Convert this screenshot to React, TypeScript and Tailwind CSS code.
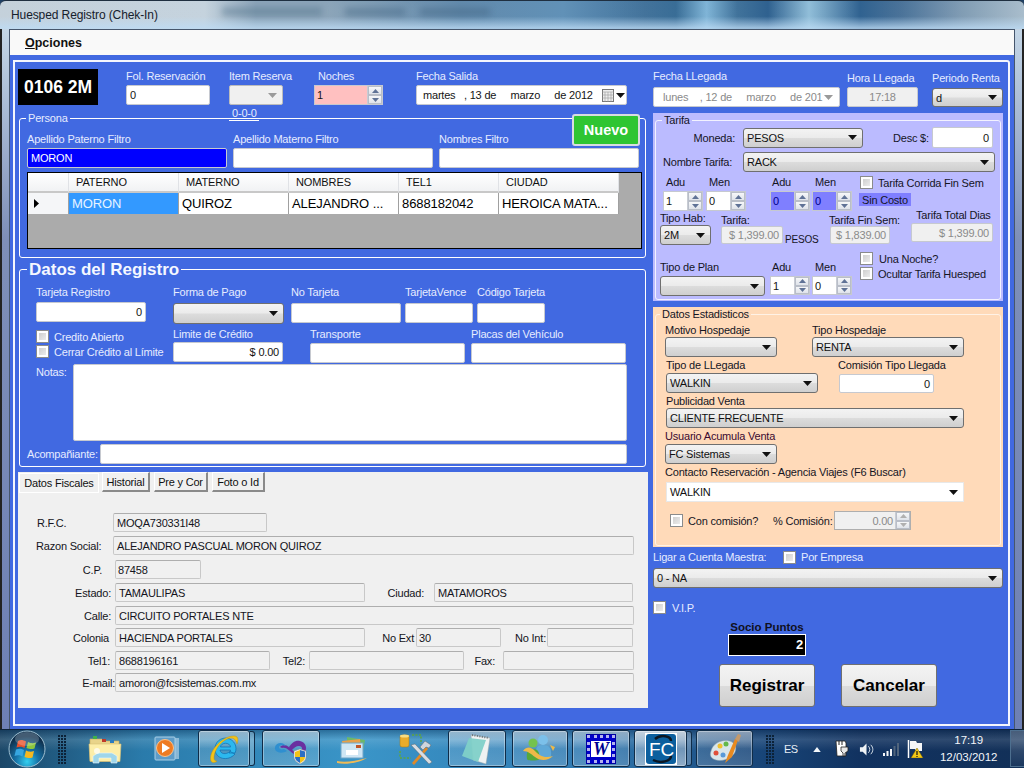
import React from 'react';

const cx = (...c: (string | undefined | false)[]) => c.filter(Boolean).join(' ');

const Lb: React.FC<{ className?: string; children: React.ReactNode }> = ({ className, children }) => (
  <span className={cx('block whitespace-nowrap', className)}>{children}</span>
);

const Arrow: React.FC<{ gray?: boolean }> = ({ gray }) => (
  <svg width="9" height="5" viewBox="0 0 9 5" className="shrink-0">
    <path d="M0 0h9L4.5 5z" fill={gray ? '#9a9a9a' : '#111'} />
  </svg>
);

const Box: React.FC<{ className?: string; right?: boolean; children?: React.ReactNode }> = ({ className, right, children }) => (
  <div className={cx('flex items-center shrink-0 whitespace-nowrap overflow-hidden px-[3px] rounded-[2px] border border-[#c6c9d0] text-[#141414]', right && 'justify-end', className ?? 'bg-white')}>
    {children}
  </div>
);

const Combo: React.FC<{ className?: string; children?: React.ReactNode }> = ({ className, children }) => (
  <div className={cx('flex items-center justify-between shrink-0 px-[3px] pr-[5px] rounded-[3px] border border-[#6f6f6f] bg-[linear-gradient(180deg,#f3f3f3_0%,#ebebeb_48%,#dcdcdc_52%,#cfcfcf_100%)] text-[#111]', className)}>
    <span className="whitespace-nowrap">{children}</span>
    <Arrow />
  </div>
);

const SpinBtns: React.FC<{ dim?: boolean }> = ({ dim }) => (
  <div className="flex flex-col w-[15px] h-full shrink-0 border-l border-[#c8ccd4] bg-[#eef0f4]">
    {[0, 1].map((i) => (
      <div key={i} className="flex-1 flex items-center justify-center border border-[#b9bec8] bg-[linear-gradient(180deg,#f6f7f9,#dfe3ea)]">
        <svg width="7" height="4" viewBox="0 0 7 4">
          <path d={i === 0 ? 'M0 4L3.5 0 7 4z' : 'M0 0h7L3.5 4z'} fill={dim ? '#b0b0b0' : '#5f7296'} />
        </svg>
      </div>
    ))}
  </div>
);

const Spin: React.FC<{ v: string; className: string; field?: string; text?: string }> = ({ v, className, field = 'bg-white', text = 'text-[#141414]' }) => (
  <div className={cx('flex shrink-0 border border-[#c6c9d0] bg-white', text, className)}>
    <div className={cx('flex-1 flex items-center pl-[2px]', field)}>{v}</div>
    <SpinBtns />
  </div>
);

const Check: React.FC<{ className?: string }> = ({ className }) => (
  <div className={cx('w-[13px] h-[13px] shrink-0 border border-[#8a8b8c] bg-white p-[2px]', className)}>
    <div className="w-full h-full bg-[linear-gradient(135deg,#cfcfcf,#ececec)]" />
  </div>
);

const Legend: React.FC<{ className: string; children: React.ReactNode }> = ({ className, children }) => (
  <span className={cx('absolute whitespace-nowrap px-[2px]', className)}>{children}</span>
);

const RO: React.FC<{ className: string; children?: React.ReactNode }> = ({ className, children }) => (
  <div className={cx('flex items-center shrink-0 h-[19px] px-[3px] border border-[#c8c8c8] border-t-[#aeaeae] rounded-[2px] bg-[#f0f0f0] whitespace-nowrap text-[#141420]', className)}>
    {children}
  </div>
);

const Tab: React.FC<{ className: string; children: React.ReactNode }> = ({ className, children }) => (
  <div className={cx('flex items-center justify-center whitespace-nowrap h-[20px] bg-[#f0f0f0] border-t border-l border-t-white border-l-white border-r-2 border-b-2 border-r-[#8a8a8a] border-b-[#8a8a8a] text-[#111]', className)}>
    {children}
  </div>
);

const Gripper: React.FC<{ className?: string }> = ({ className }) => (
  <div className={cx('grid grid-cols-3 gap-x-[1px] gap-y-[1px] w-[8px] content-center', className)}>
    {Array.from({ length: 30 }).map((_, i) => (
      <span key={i} className="w-[2px] h-[2px] bg-[#0c2238]" />
    ))}
  </div>
);

const TaskBtn: React.FC<{ className: string; active?: boolean; stack?: boolean; children: React.ReactNode }> = ({ className, active, stack, children }) => (
  <div className={cx('relative shrink-0 mb-[1px] flex items-center justify-center rounded-[3px] border border-[#0f2c48]', active ? 'bg-[linear-gradient(180deg,rgba(255,255,255,.75),rgba(255,255,255,.35)_50%,rgba(255,255,255,.5))]' : 'bg-[linear-gradient(180deg,rgba(255,255,255,.5),rgba(255,255,255,.12)_50%,rgba(255,255,255,.18))]', 'shadow-[inset_0_0_0_1px_rgba(255,255,255,.35)]', className)}>
    {children}
    {stack && <span className="absolute top-0 bottom-0 -right-[6px] w-[5px] rounded-r-[3px] border border-l-0 border-[#0f2c48] bg-white/25" />}
  </div>
);

const Orb = () => (
  <svg width="38" height="38" viewBox="0 0 38 38">
    <defs>
      <radialGradient id="orbg" cx="50%" cy="85%" r="70%">
        <stop offset="0" stopColor="#33d0f0" />
        <stop offset=".45" stopColor="#1673a8" />
        <stop offset="1" stopColor="#0f2f4c" />
      </radialGradient>
    </defs>
    <circle cx="19" cy="19" r="18" fill="url(#orbg)" stroke="#9fc0d2" strokeWidth="1" />
    <path d="M10 11c3-1.5 5-1 8 .5l-1.500 6.500c-3-1.500-5-1.500-8-.5z" fill="#e8502a" />
    <path d="M20 12c3 1.500 5 1.500 8 .5l-1.500 6c-3 1-5 .5-8-.5z" fill="#8cc63f" />
    <path d="M8 19.500c3-1 5-1 8 .5l-1.500 6.500c-3-1.500-5-1.500-8-.5z" fill="#36a6e0" />
    <path d="M18 20.500c3 1.500 5 1.500 8 .5l-1.500 6.500c-3 1-5 .5-8-.5z" fill="#f5b81f" />
    <ellipse cx="19" cy="9" rx="12" ry="7" fill="#fff" opacity=".22" />
  </svg>
);

const Folder = () => (
  <svg width="34" height="30" viewBox="0 0 34 30">
    <path d="M2 5h12l2 2h15v20H2z" fill="#e9d48a" stroke="#c7a95c" strokeWidth=".6" />
    <rect x="5" y="2" width="4" height="3" fill="#3fb04a" />
    <rect x="14" y="5" width="4" height="3" fill="#c0392b" />
    <rect x="22" y="6" width="4" height="3" fill="#2b7cc0" />
    <path d="M1 10h32l-1 17.500H2z" fill="#fdeea8" stroke="#d8bf73" strokeWidth=".6" />
    <path d="M5 29v-7l5-3h14l5 3v7h-6v-5H11v5z" fill="#9fd6ea" stroke="#e9f6fb" strokeWidth=".6" />
    <circle cx="9" cy="17" r="3" fill="#fff" opacity=".7" />
  </svg>
);

const Wmp = () => (
  <svg width="30" height="28" viewBox="0 0 30 28">
    <rect x="8" y="3" width="20" height="21" fill="#9fc6e0" opacity=".8" />
    <rect x="4" y="2" width="20" height="23" rx="1" fill="#5e9cc8" stroke="#a9cfe6" />
    <circle cx="14" cy="13" r="8.500" fill="#ee7b22" stroke="#f9c48e" />
    <path d="M11 8l8 5-8 5z" fill="#fff" />
  </svg>
);

const Ie = () => (
  <svg width="32" height="34" viewBox="0 0 32 34">
    <path d="M7 17a10.500 10.500 0 1 1 20 4h-6c1-1 1.500-2 1.500-3H12c.5 4 6 5 10 1.500l5 2.500C20 30 7 27 7 17zm5.500-2h10c-.5-5-9.500-5-10 0z" fill="#2cb8ee" stroke="#0f6fb0" strokeWidth=".7" />
    <path d="M3 29C0 21 12 5 25 4c5-.5 6 3 4 8-1-4-3-6-6-6C14 7 6 18 6 26c0 2 1 3 3 3-2 2-5 2-6 0z" fill="#f2c318" stroke="#b88a10" strokeWidth=".4" />
  </svg>
);

const Vs = () => (
  <svg width="34" height="30" viewBox="0 0 34 30">
    <path d="M6 13c4-4 8-1 11 2s7 5 10 2c2-2 1-5-2-5-3 0-5 2-7 4l-3-3c3-4 6-7 11-6 6 1 8 8 4 12-5 4-10 2-14-2-3-3-6-4-8-3z" fill="#6a2fa0" />
    <path d="M1 13c1-4 6-5 9-3l2 2c-3-1-6-1-7 1 0 2 2 3 5 2l3 2c-5 3-13 2-12-4z" fill="#2e8fd0" />
    <path d="M20 17l6-2 6 2v6c0 3-2 5-6 7-4-2-6-4-6-7z" fill="#f5f5f5" stroke="#888" strokeWidth=".5" />
    <path d="M26 16l5 1.500V23h-5zM26 23v6c-3-1.500-5-3-5-6z" fill="#2a6fc4" />
    <path d="M21 18l5-2v7h-5zM26 23h5c0 3-2 4.500-5 6z" fill="#f2c318" />
  </svg>
);

const Mail = () => (
  <svg width="32" height="30" viewBox="0 0 32 30">
    <path d="M10 3l18 3-3 16-15-3z" fill="#6bb86a" />
    <path d="M5 7l18-2 2 16-18 2z" fill="#e8a04a" />
    <rect x="4" y="9" width="22" height="15" fill="#cfe6f4" stroke="#6fa5c8" />
    <rect x="9" y="16" width="12" height="5" fill="#fff" />
    <rect x="19" y="11" width="5" height="3" fill="#c0562a" />
    <path d="M0 27c8 2 18 0 30-3-8 5-22 7-30 5z" fill="#f0bb55" />
  </svg>
);

const Tools = () => (
  <svg width="34" height="32" viewBox="0 0 34 32">
    <rect x="1" y="2" width="9" height="12" rx="2" fill="#e8ac2c" stroke="#a87a10" strokeWidth=".5" />
    <ellipse cx="5.500" cy="3" rx="4.500" ry="1.500" fill="#f7dc82" />
    <path d="M13 2h9v9M1 18v7h11" fill="none" stroke="#5fa53c" strokeWidth="1.500" strokeDasharray="2 1.500" />
    <path d="M13 30l14-16 2 2-14 16z" fill="#e08a28" />
    <path d="M12 12l4-1 17 18-3 2z" fill="#d8dde2" stroke="#555" strokeWidth=".4" />
    <path d="M21 14l5-6 6 4-2 3-3-1-3 3z" fill="#cfd6dc" stroke="#555" strokeWidth=".4" />
  </svg>
);

const Notepad = () => (
  <svg width="32" height="34" viewBox="0 0 32 34">
    <path d="M10 3l19 3-4 26-13-4z" fill="#eef2f2" stroke="#9aa7ab" strokeWidth=".5" />
    <path d="M8 6l17 2-8 22L1 24z" fill="#7fd0c8" opacity=".95" />
    <path d="M11 3l17 3" stroke="#6b7478" strokeWidth="2" strokeDasharray="1 1.500" />
  </svg>
);

const Messenger = () => (
  <svg width="34" height="30" viewBox="0 0 34 30">
    <circle cx="20" cy="6" r="5" fill="#7cc0ea" />
    <path d="M13 22c-1-8 1-11 7-11s9 3 8 11c0 3-15 3-15 0z" fill="#5fa8d8" />
    <circle cx="10" cy="9" r="4.500" fill="#74c24e" />
    <path d="M4 25c-1-7 1-10 6-10s7 3 6 10c0 2-12 2-12 0z" fill="#55a83a" />
    <path d="M0 17c4-5 8-4 12 0s9 8 18 5c-5 5-13 5-18 1-4-3-7-6-12-6z" fill="#eeb948" />
    <path d="M27 11l5 2-2 4z" fill="#eeb948" />
  </svg>
);

const WordIcon = () => (
  <div className="flex items-center justify-center w-[28px] h-[28px] bg-[#0000c8] border-[3px] border-dotted border-[#fff]/70 outline outline-1 outline-[#0000a0]">
    <span className="flex items-center justify-center w-[20px] h-[16px] bg-white font-['Liberation_Serif'] font-bold italic text-[18px] leading-none text-[#000090]">W</span>
  </div>
);

const FcIcon = () => (
  <svg width="32" height="32" viewBox="0 0 32 32">
    <rect width="32" height="32" fill="#fff" />
    <rect x="1" y="1" width="30" height="30" rx="3" fill="#0b5f9e" />
    <path d="M10 6c6-5 16-3 16 2M8 27c8 4 18 1 18-4" stroke="#0b1622" strokeWidth="2.500" fill="none" />
    <text x="4" y="23" fontFamily="Liberation Sans, sans-serif" fontSize="19" fill="#fff">FC</text>
  </svg>
);

const Paint = () => (
  <svg width="34" height="32" viewBox="0 0 34 32">
    <path d="M3 18C5 9 17 5 24 9c5 3 5 10 0 14-5 5-16 6-20 2-2-2-2-4-1-7z" fill="#d9e6ea" stroke="#8ba1ad" strokeWidth=".5" />
    <circle cx="8" cy="20" r="2.500" fill="#e0503a" />
    <circle cx="12" cy="13" r="2.500" fill="#f0c030" />
    <circle cx="18" cy="11" r="2.500" fill="#63b84a" />
    <circle cx="15" cy="22" r="2.500" fill="#5a9ad8" />
    <path d="M17 30l3-8 7-16 3 1-6 17z" fill="#e88a20" />
    <path d="M27 6l3-5 3 1-2 7z" fill="#c49a6c" />
  </svg>
);

const Tray = () => (
  <>
    <svg width="8" height="5" viewBox="0 0 9 6" className="ml-[15px]"><path d="M0 6L4.500 0 9 6z" fill="#f2f6fa" /></svg>
    <svg width="15" height="18" viewBox="0 0 15 18" className="ml-[14px]">
      <path d="M1 1h9l1 2v13H2z" fill="#fff" stroke="#222" strokeWidth=".8" />
      <path d="M4 1v4M7 1v4" stroke="#222" />
      <path d="M6 7h7v4l-3 2v3H8v-3L6 11z" fill="#e8e8e8" stroke="#222" strokeWidth=".8" />
    </svg>
    <svg width="15" height="15" viewBox="0 0 16 15" className="ml-[9px]">
      <path d="M1 5h3l4-4v13L4 10H1z" fill="#eef2f5" />
      <path d="M10 4c2 2 2 5 0 7M12.500 2.500c3 3 3 7 0 10" stroke="#dfe8ef" fill="none" />
    </svg>
    <svg width="16" height="13" viewBox="0 0 16 13" className="ml-[9px]">
      <path d="M0 10h2v3H0zM3.500 8h2v5h-2zM7 6h2v7H7z" fill="#f4f6f8" />
      <path d="M10.500 3h2v10h-2zM14 0h2v13h-2z" fill="#50647c" />
    </svg>
    <svg width="17" height="18" viewBox="0 0 17 18" className="ml-[8px]">
      <path d="M1.500 0v18" stroke="#fff" strokeWidth="1.500" />
      <path d="M3 1h6l1 2h5v8H9l-1-2H3z" fill="#f4f6f8" />
      <path d="M10 8l6 10H4z" fill="#f2c818" stroke="#7a6000" strokeWidth=".5" />
      <path d="M10 11v4M10 16v1" stroke="#111" strokeWidth="1.200" />
    </svg>
  </>
);

export default function App() {
  return (
    <div className="relative flex flex-col w-[1024px] h-[768px] overflow-hidden bg-[#1d3e62] font-['Liberation_Sans',Arial,sans-serif] text-[11px] tracking-[-0.2px] leading-[14px]">
      {/* window glass */}
      <div className="flex flex-col h-[729px] shrink-0 rounded-t-[6px] border-t border-[#1f2f40] bg-[linear-gradient(90deg,#c3d0da_0%,#c4d2dd_20%,#8aa3b8_25%,#8aa3b8_32%,#5f88aa_45%,#5e8fb6_55%,#3f7099_63%,#356a94_66%,#7db3d6_69%,#3d7099_72%,#2b5e8d_75%,#8fbdd8_79%,#2c5f8e_84%,#477097_88%,#7f9bb3_94%,#a7bccb_100%)]">
        <div className="relative h-[28px] shrink-0 pl-[11px] pt-[7px] text-[12px] tracking-[-0.1px] text-[#15202c] bg-[linear-gradient(180deg,rgba(255,255,255,.02)_55%,rgba(190,220,245,.75)_95%)]">
          Huesped Registro (Chek-In)
          <span aria-hidden className="absolute left-[222px] top-[6px] w-[100px] h-[9px] bg-[#4b6d88]/40 blur-[3px]" />
          <span aria-hidden className="absolute left-[345px] top-[7px] w-[60px] h-[8px] bg-[#3d5f7c]/40 blur-[3px]" />
          <span aria-hidden className="absolute left-[420px] top-[7px] w-[70px] h-[8px] bg-[#3d5f7c]/40 blur-[3px]" />
        </div>

        <div className="flex flex-1 min-h-0 bg-[linear-gradient(180deg,#c4d6e6,#7e8fb8_30%,#6e80b4)]">
          <div className="w-[9px] shrink-0 border-l-2 border-[#232323]" />
          <div className="flex flex-col w-[1006px] shrink-0 border-x border-t border-[#46566c]">
            <div className="flex items-center h-[25px] shrink-0 pl-[15px] bg-[#f9f9f9] text-[12.5px] tracking-normal font-bold text-[#111]">
              <span><span className="underline">O</span>pciones</span>
            </div>

            <div className="flex-1 min-h-0 bg-[#4169e1] pl-[3px] pt-[5px] pb-[3px] pr-[4px]">
              <div className="flex w-[997px] h-full border-2 border-[#f4f6fd] rounded-tr-[3px] text-[#e6ecff]">
                {/* left column */}
                <div className="flex flex-col w-[632px] ml-[3px] shrink-0 pt-[7px]">
                  <div className="flex h-[36px] shrink-0">
                    <div className="flex items-center justify-center w-[80px] h-[36px] bg-black text-white font-bold text-[17.5px] tracking-normal">0106 2M</div>
                    <div className="ml-[28px] w-[84px]">
                      <Lb className="h-[16px]">Fol. Reservación</Lb>
                      <Box className="h-[20px] bg-white">0</Box>
                    </div>
                    <div className="ml-[19px] w-[54px]">
                      <Lb className="h-[16px]">Item Reserva</Lb>
                      <div className="flex items-center justify-end h-[20px] pr-[5px] rounded-[2px] border border-[#bcbcbc] bg-[#f0f0f0]"><Arrow gray /></div>
                      <Lb className="mt-[1px] pl-[3px] border-b border-white w-[30px]">0-0-0</Lb>
                    </div>
                    <div className="ml-[31px] w-[69px]">
                      <Lb className="h-[16px] pl-[4px]">Noches</Lb>
                      <Spin v="1" className="h-[20px] w-[69px]" field="bg-[#ffc0c0]" />
                    </div>
                    <div className="ml-[33px] w-[211px]">
                      <Lb className="h-[16px]">Fecha Salida</Lb>
                      <Box className="h-[20px] bg-white justify-between pl-[6px] pr-[1px]">
                        <span className="whitespace-pre">martes   , 13 de     marzo     de 2012</span>
                        <span className="flex items-center gap-[2px]">
                          <svg width="12" height="13" viewBox="0 0 12 13"><rect x=".5" y=".5" width="11" height="12" fill="#eee" stroke="#777" /><path d="M0 3h12M3 3v10M6 3v10M9 3v10M0 6h12M0 9h12" stroke="#999" strokeWidth=".6" /></svg>
                          <Arrow />
                        </span>
                      </Box>
                    </div>
                  </div>

                  {/* Persona */}
                  <div className="relative ml-[1px] mt-[13px] w-[627px] h-[140px] shrink-0 border border-white rounded-[3px] pl-[7px] pt-[13px]">
                    <Legend className="left-[6px] -top-[8px] bg-[#4169e1]">Persona</Legend>
                    <div className="absolute left-[552px] -top-[5px] flex items-center justify-center w-[68px] h-[32px] rounded-[3px] border-2 border-[#d8dce0] bg-[#2ec532] text-white font-bold text-[14.5px] tracking-normal">Nuevo</div>
                    <div className="flex gap-[6px]">
                      {['Apellido Paterno Filtro', 'Apellido Materno Filtro', 'Nombres Filtro'].map((t, i) => (
                        <div key={t} className="w-[200px]">
                          <Lb className="h-[16px]">{t}</Lb>
                          <Box className={i === 0 ? 'h-[20px] bg-[#0000ff] !text-white' : 'h-[20px] bg-white'}>{i === 0 ? 'MORON' : ''}</Box>
                        </div>
                      ))}
                    </div>
                    <div className="mt-[4px] w-[615px] h-[77px] border border-black bg-[#ababab] text-[13px] tracking-[-0.1px] text-black">
                      <div className="flex h-[20px] text-[11px] tracking-[-0.1px] text-[#111]">
                        {[['', 'w-[41px]'], ['PATERNO', 'w-[110px]'], ['MATERNO', 'w-[110px]'], ['NOMBRES', 'w-[110px]'], ['TEL1', 'w-[100px]'], ['CIUDAD', 'w-[120px]']].map(([t, w]) => (
                          <div key={t} className={cx('flex items-center pl-[7px] border-r border-b-2 border-r-[#e0e2e6] border-b-[#c8c8c8] bg-[linear-gradient(180deg,#fff,#f1f2f4)]', w)}>{t}</div>
                        ))}
                      </div>
                      <div className="flex h-[21px]">
                        <div className="flex items-center pl-[6px] w-[41px] border-r border-[#a0a0a0] bg-[#f5f6f8]">
                          <svg width="5" height="9" viewBox="0 0 5 9"><path d="M0 0l5 4.500L0 9z" fill="#000" /></svg>
                        </div>
                        <div className="flex items-center pl-[3px] w-[110px] bg-[#3399ff] text-[#e8f4ff] border-r border-[#a0a0a0]">MORON</div>
                        {[['QUIROZ', 'w-[110px]'], ['ALEJANDRO ...', 'w-[110px]'], ['8688182042', 'w-[100px]'], ['HEROICA MATA...', 'w-[120px]']].map(([t, w]) => (
                          <div key={t} className={cx('flex items-center pl-[3px] bg-white border-r border-[#a0a0a0] whitespace-nowrap overflow-hidden', w)}>{t}</div>
                        ))}
                      </div>
                    </div>
                  </div>

                  {/* Datos del Registro */}
                  <div className="relative ml-[1px] mt-[11px] w-[627px] h-[198px] shrink-0 border border-white rounded-[3px] pt-[15px]">
                    <Legend className="left-[7px] -top-[11px] bg-[#4169e1] text-[17px] tracking-normal leading-[22px] font-bold text-[#f4f7ff]">Datos del Registro</Legend>
                    <div className="flex h-[39px] pl-[16px]">
                      <div className="w-[110px]">
                        <Lb className="h-[17px]">Tarjeta Registro</Lb>
                        <Box right className="h-[20px] bg-white">0</Box>
                      </div>
                      <div className="ml-[27px] w-[111px]">
                        <Lb className="h-[18px]">Forma de Pago</Lb>
                        <Combo className="h-[21px]" />
                      </div>
                      <div className="ml-[7px] w-[110px]">
                        <Lb className="h-[18px]">No Tarjeta</Lb>
                        <Box className="h-[20px] bg-white" />
                      </div>
                      <div className="ml-[4px] w-[68px]">
                        <Lb className="h-[18px]">TarjetaVence</Lb>
                        <Box className="h-[20px] bg-white" />
                      </div>
                      <div className="ml-[4px] w-[68px]">
                        <Lb className="h-[18px]">Código Tarjeta</Lb>
                        <Box className="h-[20px] bg-white" />
                      </div>
                    </div>
                    <div className="flex h-[36px] mt-[3px] pl-[16px]">
                      <div className="w-[137px] pt-[3px]">
                        <div className="flex items-center gap-[5px] h-[13px]"><Check /><Lb>Credito Abierto</Lb></div>
                        <div className="flex items-center gap-[5px] h-[13px] mt-[2px]"><Check /><Lb>Cerrar Crédito al Límite</Lb></div>
                      </div>
                      <div className="w-[110px]">
                        <Lb className="h-[15px]">Limite de Crédito</Lb>
                        <Box right className="h-[20px] bg-white">$ 0.00</Box>
                      </div>
                      <div className="ml-[27px] w-[155px]">
                        <Lb className="h-[16px]">Transporte</Lb>
                        <Box className="h-[20px] bg-white" />
                      </div>
                      <div className="ml-[6px] w-[155px]">
                        <Lb className="h-[16px]">Placas del Vehículo</Lb>
                        <Box className="h-[20px] bg-white" />
                      </div>
                    </div>
                    <div className="flex h-[77px] mt-[1px] pl-[16px]">
                      <Lb className="w-[37px] pt-[1px]">Notas:</Lb>
                      <Box className="w-[554px] h-[77px] bg-white" />
                    </div>
                    <div className="flex items-center h-[20px] mt-[3px] pl-[7px]">
                      <Lb className="w-[73px]">Acompañiante:</Lb>
                      <Box className="w-[527px] h-[20px] bg-white" />
                    </div>
                  </div>

                  {/* tabs */}
                  <div className="mt-[5px] w-[630px] h-[236px] shrink-0 bg-[#f0f0f0] text-[#141420]">
                    <div className="flex items-start h-[41px] pl-[1px]">
                      <Tab className="w-[80px] mt-[1px] !border-r !border-b !border-r-white !border-b-white">Datos Fiscales</Tab>
                      <Tab className="w-[48px] ml-[3px]">Historial</Tab>
                      <Tab className="w-[54px] ml-[4px]">Pre y Cor</Tab>
                      <Tab className="w-[53px] ml-[4px]">Foto o Id</Tab>
                    </div>
                    <div className="flex items-center">
                      <Lb className="w-[95px] pl-[19px]">R.F.C.</Lb>
                      <RO className="w-[154px]">MOQA730331I48</RO>
                    </div>
                    <div className="flex items-center mt-[4px]">
                      <Lb className="w-[95px] pl-[18px]">Razon Social:</Lb>
                      <RO className="w-[521px]">ALEJANDRO PASCUAL MORON QUIROZ</RO>
                    </div>
                    <div className="flex items-center mt-[5px]">
                      <Lb className="w-[97px] pr-[13px] text-right">C.P.</Lb>
                      <RO className="w-[86px] pl-[2px]">87458</RO>
                    </div>
                    <div className="flex items-center mt-[4px]">
                      <Lb className="w-[97px] pr-[4px] text-right">Estado:</Lb>
                      <RO className="w-[250px]">TAMAULIPAS</RO>
                      <Lb className="w-[69px] pr-[10px] text-right">Ciudad:</Lb>
                      <RO className="w-[199px]">MATAMOROS</RO>
                    </div>
                    <div className="flex items-center mt-[4px]">
                      <Lb className="w-[97px] pr-[4px] text-right">Calle:</Lb>
                      <RO className="w-[519px]">CIRCUITO PORTALES NTE</RO>
                    </div>
                    <div className="flex items-center mt-[3px]">
                      <Lb className="w-[97px] pr-[6px] text-right">Colonia</Lb>
                      <RO className="w-[250px]">HACIENDA PORTALES</RO>
                      <Lb className="w-[51px] pr-[2px] text-right">No Ext</Lb>
                      <RO className="w-[85px] pl-[2px]">30</RO>
                      <Lb className="w-[46px] pr-[1px] text-right">No Int:</Lb>
                      <RO className="w-[86px]" />
                    </div>
                    <div className="flex items-center mt-[4px]">
                      <Lb className="w-[97px] pr-[5px] text-right">Tel1:</Lb>
                      <RO className="w-[155px]">8688196161</RO>
                      <Lb className="w-[39px] pr-[4px] text-right">Tel2:</Lb>
                      <RO className="w-[155px]" />
                      <Lb className="w-[39px] pr-[8px] text-right">Fax:</Lb>
                      <RO className="w-[131px]" />
                    </div>
                    <div className="flex items-center mt-[3px]">
                      <Lb className="w-[97px] text-right">E-mail:</Lb>
                      <RO className="w-[519px]">amoron@fcsistemas.com.mx</RO>
                    </div>
                  </div>
                </div>

                {/* right column */}
                <div className="flex flex-col w-[350px] ml-[3px] shrink-0 pt-[7px]">
                  <div className="flex h-[38px] shrink-0">
                    <div className="w-[187px]">
                      <Lb className="h-[18px]">Fecha LLegada</Lb>
                      <Box className="h-[20px] bg-white justify-between !text-[#8a8a8a] pl-[9px] pr-[6px]">
                        <span className="whitespace-pre">lunes    , 12 de     marzo     de 201</span>
                        <Arrow gray />
                      </Box>
                    </div>
                    <div className="ml-[7px] w-[71px]">
                      <Lb className="h-[18px] pt-[2px]">Hora LLegada</Lb>
                      <Box className="h-[20px] bg-[#f0f0f0] justify-center !text-[#8a8a8a]">17:18</Box>
                    </div>
                    <div className="ml-[14px] w-[71px]">
                      <Lb className="h-[19px] pt-[2px]">Periodo Renta</Lb>
                      <Combo className="h-[19px]">d</Combo>
                    </div>
                  </div>

                  {/* Tarifa */}
                  <div className="mt-[6px] w-[350px] h-[188px] shrink-0 bg-[#bbbbff] pl-[2px] pt-[7px] text-[#15151f]">
                    <div className="relative w-[346px] h-[180px] border border-[#f2f2ff] rounded-[3px]">
                      <Legend className="left-[6px] -top-[8px] bg-[#bbbbff]">Tarifa</Legend>
                      <div className="flex items-center h-[21px] mt-[6px]">
                        <Lb className="w-[79px] text-right">Moneda:</Lb>
                        <Combo className="ml-[8px] w-[120px] h-[20px]">PESOS</Combo>
                        <Lb className="ml-[30px] w-[36px]">Desc $:</Lb>
                        <Box right className="ml-[3px] w-[61px] h-[21px] bg-white">0</Box>
                      </div>
                      <div className="flex items-center h-[20px] mt-[4px]">
                        <Lb className="ml-[7px] w-[70px]">Nombre Tarifa:</Lb>
                        <Combo className="ml-[10px] w-[252px] h-[20px]">RACK</Combo>
                      </div>
                      <div className="flex items-start h-[36px] mt-[3px]">
                        <div className="ml-[7px] w-[40px]"><Lb className="h-[16px] pl-[3px]">Adu</Lb><Spin v="1" className="h-[20px] w-[40px]" /></div>
                        <div className="ml-[3px] w-[40px]"><Lb className="h-[16px] pl-[3px]">Men</Lb><Spin v="0" className="h-[20px] w-[40px]" /></div>
                        <div className="ml-[24px] w-[40px]"><Lb className="h-[16px] pl-[2px]">Adu</Lb><Spin v="0" className="h-[20px] w-[40px]" field="bg-[#7f7fff]" text="text-[#00008a]" /></div>
                        <div className="ml-[2px] w-[40px]"><Lb className="h-[16px] pl-[3px]">Men</Lb><Spin v="0" className="h-[20px] w-[40px]" field="bg-[#7f7fff]" text="text-[#00008a]" /></div>
                        <div className="ml-[7px]">
                          <div className="flex items-center gap-[5px] ml-[1px] mt-[1px] h-[13px]"><Check /><Lb>Tarifa Corrida Fin Sem</Lb></div>
                          <div className="flex items-center w-[52px] h-[13px] mt-[4px] pl-[3px] bg-[#7f7fff]"><Lb>Sin Costo</Lb></div>
                        </div>
                      </div>
                      <div className="flex items-start h-[33px] mt-[1px]">
                        <div className="ml-[4px] w-[51px]"><Lb className="h-[13px] leading-[13px]">Tipo Hab:</Lb><Combo className="h-[20px]">2M</Combo></div>
                        <div className="ml-[10px] w-[62px] mt-[2px]"><Lb className="h-[12px] leading-[12px]">Tarifa:</Lb><Box right className="h-[18px] bg-[#f0f0f0] !text-[#8a8a8a] w-[62px]">$ 1,399.00</Box></div>
                        <Lb className="ml-[2px] w-[44px] mt-[21px] text-[10px]">PESOS</Lb>
                        <div className="w-[61px] mt-[2px]"><Lb className="h-[12px] leading-[12px]">Tarifa Fin Sem:</Lb><Box right className="ml-[1px] h-[18px] bg-[#f0f0f0] !text-[#8a8a8a] w-[60px]">$ 1,839.00</Box></div>
                        <div className="ml-[21px] w-[82px] -mt-[4px]"><Lb className="h-[15px] pl-[5px]">Tarifa Total Dias</Lb><Box right className="h-[19px] bg-[#f0f0f0] !text-[#8a8a8a]">$ 1,399.00</Box></div>
                      </div>
                      <div className="flex items-start mt-[5px]">
                        <div className="ml-[4px] w-[105px] mt-[10px]"><Lb className="h-[16px]">Tipo de Plan</Lb><Combo className="h-[20px]" /></div>
                        <div className="ml-[5px] w-[40px] mt-[10px]"><Lb className="h-[16px] pl-[2px]">Adu</Lb><Spin v="1" className="h-[19px] w-[40px]" /></div>
                        <div className="ml-[2px] w-[40px] mt-[10px]"><Lb className="h-[16px] pl-[3px]">Men</Lb><Spin v="0" className="h-[19px] w-[40px]" /></div>
                        <div className="ml-[8px] mt-[2px]">
                          <div className="flex items-center gap-[6px] h-[13px]"><Check /><Lb>Una Noche?</Lb></div>
                          <div className="flex items-center gap-[5px] h-[13px] mt-[2px]"><Check /><Lb>Ocultar Tarifa Huesped</Lb></div>
                        </div>
                      </div>
                    </div>
                  </div>

                  {/* Datos Estadisticos */}
                  <div className="mt-[6px] w-[350px] h-[240px] shrink-0 bg-[#ffdab9] pl-[2px] pt-[7px] text-[#15151f]">
                    <div className="relative w-[346px] h-[232px] border border-[#fff2e6] rounded-[3px] pt-[8px]">
                      <Legend className="left-[4px] -top-[8px] bg-[#ffdab9]">Datos Estadisticos</Legend>
                      <div className="flex h-[34px]">
                        <div className="ml-[9px] w-[112px]"><Lb className="h-[14px]">Motivo Hospedaje</Lb><Combo className="h-[20px]" /></div>
                        <div className="ml-[35px] w-[152px]"><Lb className="h-[14px]">Tipo Hospedaje</Lb><Combo className="h-[20px]">RENTA</Combo></div>
                      </div>
                      <div className="flex h-[35px] mt-[1px]">
                        <div className="ml-[10px] w-[152px]"><Lb className="h-[15px]">Tipo de LLegada</Lb><Combo className="h-[20px]">WALKIN</Combo></div>
                        <div className="ml-[20px] w-[110px]"><Lb className="h-[16px]">Comisión Tipo Llegada</Lb><Box right className="ml-[1px] w-[95px] h-[19px] bg-white">0</Box></div>
                      </div>
                      <div className="ml-[10px] w-[298px] mt-[1px]"><Lb className="h-[14px]">Publicidad Venta</Lb><Combo className="h-[20px]">CLIENTE FRECUENTE</Combo></div>
                      <div className="ml-[9px] w-[112px] mt-[1px]"><Lb className="h-[15px] text-[#3b0a30]">Usuario Acumula Venta</Lb><Combo className="h-[20px]">FC Sistemas</Combo></div>
                      <div className="ml-[9px] w-[299px] mt-[1px]">
                        <Lb className="h-[17px]">Contacto Reservación - Agencia Viajes (F6 Buscar)</Lb>
                        <div className="flex items-center justify-between h-[20px] ml-[1px] px-[3px] pr-[5px] bg-white border border-[#e8e8e8] text-[#111]">WALKIN<Arrow /></div>
                      </div>
                      <div className="flex items-center h-[19px] mt-[9px]">
                        <Check className="ml-[14px]" />
                        <Lb className="ml-[5px] w-[85px]">Con comisión?</Lb>
                        <Lb className="w-[61px]">% Comisión:</Lb>
                        <div className="flex w-[77px] h-[19px] border border-[#aeaeae] bg-[#f0f0f0] text-[#8a8a8a]">
                          <div className="flex-1 flex items-center justify-end pr-[2px]">0.00</div>
                          <SpinBtns dim />
                        </div>
                      </div>
                    </div>
                  </div>

                  <div className="flex items-center h-[14px] mt-[3px]">
                    <Lb className="w-[130px]">Ligar a Cuenta Maestra:</Lb>
                    <Check />
                    <Lb className="ml-[5px]">Por Empresa</Lb>
                  </div>
                  <Combo className="mt-[4px] w-[350px] h-[20px]">0 - NA</Combo>
                  <div className="flex items-center gap-[6px] h-[13px] mt-[13px]"><Check /><Lb>V.I.P.</Lb></div>
                  <div className="flex flex-col items-center w-[78px] ml-[75px] mt-[6px]">
                    <Lb className="h-[14px] font-bold text-[11.5px] tracking-normal text-[#10101c]">Socio Puntos</Lb>
                    <div className="flex items-center justify-end w-[78px] h-[22px] pr-[2px] bg-black border border-white text-white text-[13px] font-bold">2</div>
                  </div>
                  <div className="flex mt-[8px] ml-[66px] gap-[26px]">
                    {['Registrar', 'Cancelar'].map((t) => (
                      <div key={t} className="flex items-center justify-center w-[96px] h-[43px] rounded-[3px] border border-[#707070] bg-[linear-gradient(180deg,#f3f3f3,#ebebeb_50%,#dcdcdc_52%,#cfcfcf)] text-black font-bold text-[17px] tracking-normal">{t}</div>
                    ))}
                  </div>
                </div>
              </div>
            </div>
          </div>
          <div className="flex-1 border-r-2 border-[#232323]" />
        </div>
      </div>

      {/* taskbar */}
      <div className="flex items-stretch h-[39px] shrink-0 tracking-normal border-t border-[#0f2338] bg-[linear-gradient(180deg,rgba(12,35,66,.32)_0%,rgba(255,255,255,.12)_25%,rgba(0,0,0,0)_55%),linear-gradient(90deg,#1b4768_0%,#2a7bab_14%,#3a95c8_35%,#2f78b0_58%,#1a4a7e_72%,#113260_84%,#123058_100%)]">
        <div className="flex items-center pl-[8px] w-[58px] shrink-0"><Orb /></div>
        <Gripper />
        <div className="flex items-center justify-center ml-[22px] w-[34px] shrink-0"><Folder /></div>
        <div className="flex items-center justify-center ml-[29px] w-[30px] shrink-0"><Wmp /></div>
        <TaskBtn className="ml-[17px] w-[52px]" stack><Ie /></TaskBtn>
        <TaskBtn className="ml-[12px] w-[58px]"><Vs /></TaskBtn>
        <div className="flex items-center justify-center ml-[17px] w-[32px] shrink-0"><Mail /></div>
        <div className="flex items-center justify-center ml-[30px] w-[34px] shrink-0"><Tools /></div>
        <TaskBtn className="ml-[15px] w-[58px]"><Notepad /></TaskBtn>
        <TaskBtn className="ml-[6px] w-[56px]"><Messenger /></TaskBtn>
        <TaskBtn className="ml-[4px] w-[58px]"><WordIcon /></TaskBtn>
        <TaskBtn className="ml-[4px] w-[53px]" active stack><FcIcon /></TaskBtn>
        <TaskBtn className="ml-[9px] w-[57px]"><Paint /></TaskBtn>
        <Gripper className="ml-[13px]" />
        <div className="flex items-center h-full ml-[10px] text-[11px] tracking-[-0.5px] text-[#e6edf4]">
          <span>ES</span>
          <Tray />
        </div>
        <div className="flex flex-col items-center justify-center w-[66px] ml-[12px] text-[11.5px] leading-[17px] text-[#f2f6fa]">
          <span>17:19</span>
          <span>12/03/2012</span>
        </div>
        <div className="flex-1 ml-[8px] mb-[1px] border border-[#4d6f8f] border-r-0 bg-[linear-gradient(180deg,rgba(255,255,255,.22),rgba(255,255,255,.04))]" />
      </div>
    </div>
  );
}
